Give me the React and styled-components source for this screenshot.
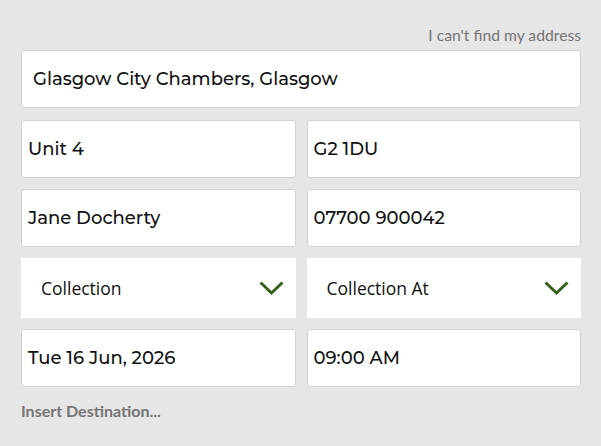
import React from "react";
import styled, { createGlobalStyle } from "styled-components";

const Global = createGlobalStyle`
  html, body { margin: 0; padding: 0; background: #e6e6e6; }
  body { width: 601px; height: 446px; overflow: hidden; }
`;

const Page = styled.div`
  padding: 26px 20px 0 21px;
  display: flex;
  flex-direction: column;
`;

const LinkRow = styled.div`
  display: flex;
  justify-content: flex-end;
  height: 24px;
`;

const Link = styled.span`
  font-family: Lato, "Liberation Sans", sans-serif;
  font-size: 15.7px;
  color: #757575;
  line-height: 18px;
`;

const Grid = styled.div`
  display: grid;
  grid-template-columns: 1fr 1fr;
  column-gap: 11px;
  row-gap: 11px;
`;

const Field = styled.div`
  grid-column: ${(p) => (p.$full ? "1 / span 2" : "auto")};
  height: 58px;
  margin-bottom: ${(p) => (p.$full ? "1px" : "0")};
  background: #fff;
  border: 1px solid #d2d2d2;
  border-radius: 3px;
  box-sizing: border-box;
  display: flex;
  align-items: center;
  padding-left: ${(p) => (p.$full ? "11px" : "6px")};
  font-family: Montserrat, Inter, "DejaVu Sans", sans-serif;
  font-size: 18px;
  font-weight: 500;
  color: #111;
`;

const Select = styled.div`
  height: 60px;
  background: #fff;
  box-sizing: border-box;
  display: flex;
  align-items: center;
  justify-content: space-between;
  padding: 0 12px 0 20px;
  font-family: "Open Sans", "Noto Sans", sans-serif;
  font-size: 17.5px;
  color: #111;
`;

const Chevron = () => (
  <svg width="25" height="15" viewBox="0 0 25 15">
    <path d="M1.5 1.5 L12.5 12 L23.5 1.5" fill="none" stroke="#35611c" strokeWidth="3" />
  </svg>
);

const Footer = styled.div`
  margin-top: 14px;
  font-family: Lato, "Liberation Sans", sans-serif;
  font-size: 16px;
  line-height: 19px;
  font-weight: 700;
  color: #757575;
`;

export default function App() {
  return (
    <>
      <Global />
      <Page>
        <LinkRow>
          <Link>I can't find my address</Link>
        </LinkRow>
        <Grid>
          <Field $full>Glasgow City Chambers, Glasgow</Field>
          <Field>Unit 4</Field>
          <Field>G2 1DU</Field>
          <Field>Jane Docherty</Field>
          <Field>07700 900042</Field>
          <Select>
            Collection
            <Chevron />
          </Select>
          <Select>
            Collection At
            <Chevron />
          </Select>
          <Field>Tue 16 Jun, 2026</Field>
          <Field>09:00 AM</Field>
        </Grid>
        <Footer>Insert Destination...</Footer>
      </Page>
    </>
  );
}
